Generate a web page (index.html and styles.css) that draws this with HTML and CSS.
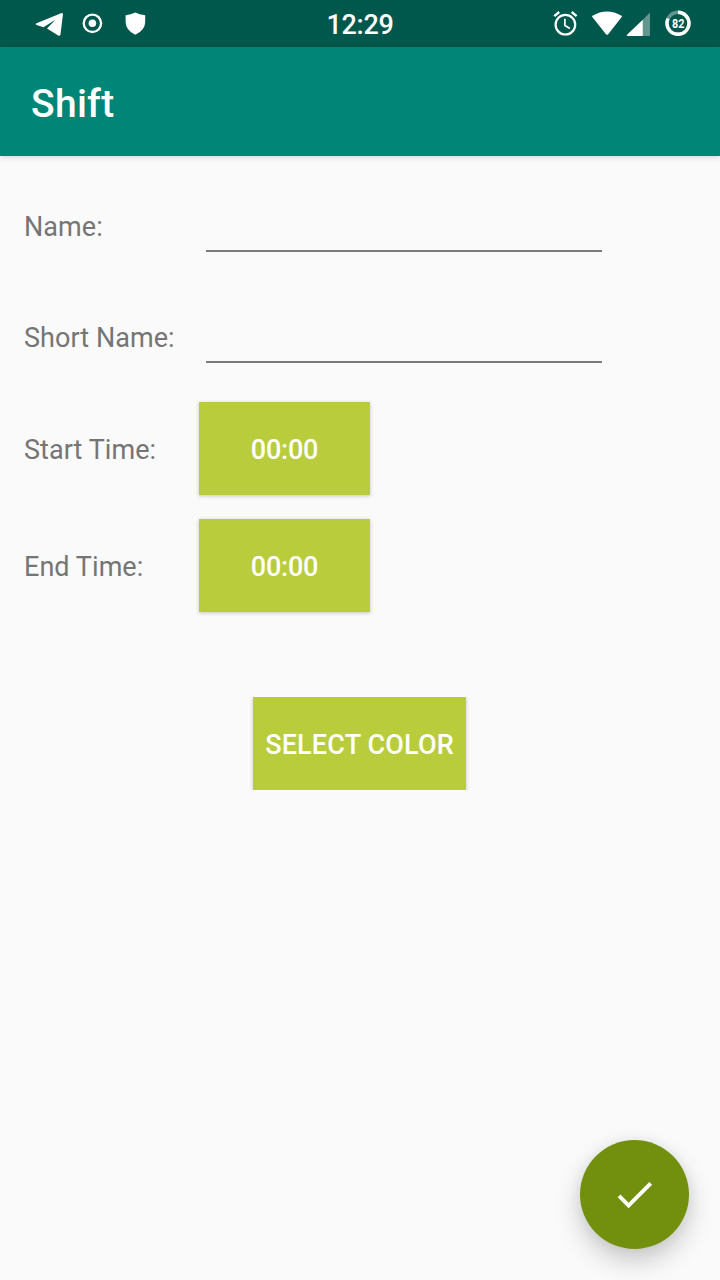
FILE: index.html
```html
<!DOCTYPE html>
<html lang="en">
<head>
<meta charset="utf-8">
<title>Shift</title>
<link rel="stylesheet" href="styles.css">
</head>
<body>
<div class="screen">
  <header class="status-bar">
    <svg class="status-icons" width="140" height="47" viewBox="20 0 140 47" fill="#fff" aria-hidden="true">
      <path d="M36.5 23.3 61 13.3Q63.3 12.5 62.9 14.8L60.5 34.3Q60 36.8 57.8 35.3L47 28.6 55.4 19.8 43.5 27.2 36.6 25.1Q34.5 24.2 36.5 23.3Z"/>
      <circle cx="92.4" cy="23.3" r="8.7" fill="none" stroke="#fff" stroke-width="2.3"/>
      <circle cx="92.4" cy="23.3" r="3.8"/>
      <path d="M135.3 12.6Q139.5 15 145.2 15.2V22Q145 30.5 135.3 34.8 125.8 30.5 125.6 22V15.2Q131 15 135.3 12.6Z"/>
    </svg>
    <time class="clock">12:29</time>
    <svg class="status-icons" width="160" height="47" viewBox="540 0 160 47" fill="#fff" aria-hidden="true">
      <g fill="none" stroke="#fff">
        <circle cx="565.4" cy="24.7" r="9.8" stroke-width="2.2"/>
        <path d="M554.3 16.2 559.2 12M576.6 16.2 571.7 12" stroke-width="2.4"/>
        <path d="M564.9 18.8V25.5L569.9 28.4" stroke-width="1.7"/>
      </g>
      <path d="M592.4 15.8Q607 7.2 621.7 15.8Q622.2 16.4 621.7 17.1L608.2 34.2Q607.1 35.5 606 34.2L592.3 17.1Q591.8 16.4 592.4 15.8Z"/>
      <path d="M650 12.5V36H642.8V19.7Z" opacity=".38"/>
      <path d="M642.8 19.7V36H627.5Q626 35.8 627 34.7Z"/>
      <circle cx="678" cy="23.3" r="11" fill="none" stroke="#fff" stroke-opacity=".38" stroke-width="3.4"/>
      <circle cx="678" cy="23.3" r="11" fill="none" stroke="#fff" stroke-width="3.4" pathLength="100" stroke-dasharray="82 18" transform="rotate(-90 678 23.3)"/>
      <text class="battery-level" x="678.2" y="28" text-anchor="middle" textLength="12.4" lengthAdjust="spacingAndGlyphs">82</text>
    </svg>
  </header>
  <div class="app-bar"><h1 class="title">Shift</h1></div>
  <main class="content">
    <form class="form">
      <label class="label field-label" for="name">Name:</label>
      <input class="field" id="name" type="text">
      <label class="label field-label" for="short-name">Short Name:</label>
      <input class="field" id="short-name" type="text">
      <span class="label">Start Time:</span>
      <button class="button time-button" type="button">00:00</button>
      <span class="label">End Time:</span>
      <button class="button time-button" type="button">00:00</button>
    </form>
    <div class="color-clip"><button class="button color-button" type="button">SELECT COLOR</button></div>
  </main>
  <button class="fab" type="button" aria-label="Save">
    <svg width="47" height="47" viewBox="0 0 24 24" aria-hidden="true"><path fill="#fff" d="M9 16.17 4.83 12l-1.42 1.41L9 19 21 7l-1.41-1.41z"/></svg>
  </button>
</div>
</body>
</html>
```
FILE: styles.css
```css
* {
  box-sizing: border-box;
}

body {
  margin: 0;
  font-family: Roboto, sans-serif;
}

.screen {
  position: relative;
  width: 720px;
  height: 1280px;
  overflow: hidden;
  background: #fafafa;
}

.status-bar {
  display: grid;
  grid-template-columns: 1fr auto 1fr;
  align-items: center;
  height: 47px;
  padding: 0 20px;
  background: #00574b;
  color: #fff;
}

.status-icons {
  display: block;
}

.status-icons:last-child {
  justify-self: end;
}

.clock {
  padding-top: 2px;
  font-size: 27px;
  font-weight: 500;
  line-height: 32px;
  letter-spacing: -0.3px;
}

.battery-level {
  font-size: 13px;
  font-weight: 700;
}

.app-bar {
  display: flex;
  align-items: center;
  height: 109px;
  padding: 4px 31px 0;
  background: #008577;
  box-shadow: 0 1px 6px rgba(0, 0, 0, 0.16);
}

.title {
  margin: 0;
  color: #fff;
  font-size: 39px;
  font-weight: 500;
  line-height: 46px;
  letter-spacing: 0.3px;
}

.content {
  padding-top: 26px;
}

.form {
  display: grid;
  grid-template-columns: 175px 404px;
  grid-template-rows: 87px 85px 93px 93px;
  row-gap: 24px;
  align-items: center;
  padding-left: 24px;
}

.label {
  padding-top: 2px;
  color: #757575;
  font-size: 27px;
  line-height: 32px;
  letter-spacing: 0.05px;
}

.field-label {
  align-self: start;
  padding-top: 29px;
}

.field {
  align-self: start;
  width: 396px;
  height: 70px;
  margin-left: 7px;
  padding: 24px 0 10px;
  border: 0;
  border-bottom: 2px solid #7b7b7b;
  outline: 0;
  background: transparent;
  font: 35px Roboto, sans-serif;
}

.button {
  height: 93px;
  padding: 3px 0 0;
  border: 0;
  background: #b9cc3b;
  color: #fff;
  font: 500 27px/32px Roboto, sans-serif;
  box-shadow: 0 1px 4px rgba(0, 0, 0, 0.22);
}

.time-button {
  width: 171px;
  letter-spacing: -0.2px;
}

.color-clip {
  display: flex;
  justify-content: center;
  height: 93px;
  margin-top: 85px;
  padding-right: 1px;
  overflow: hidden;
}

.color-button {
  width: 213px;
  letter-spacing: 0.15px;
}

.fab {
  position: absolute;
  right: 31px;
  bottom: 31px;
  display: grid;
  place-items: center;
  width: 109px;
  height: 109px;
  padding: 0;
  border: 0;
  border-radius: 50%;
  background: #72900d;
  box-shadow: 0 12px 26px rgba(0, 0, 0, 0.2), 0 0 14px rgba(0, 0, 0, 0.06);
}
```
